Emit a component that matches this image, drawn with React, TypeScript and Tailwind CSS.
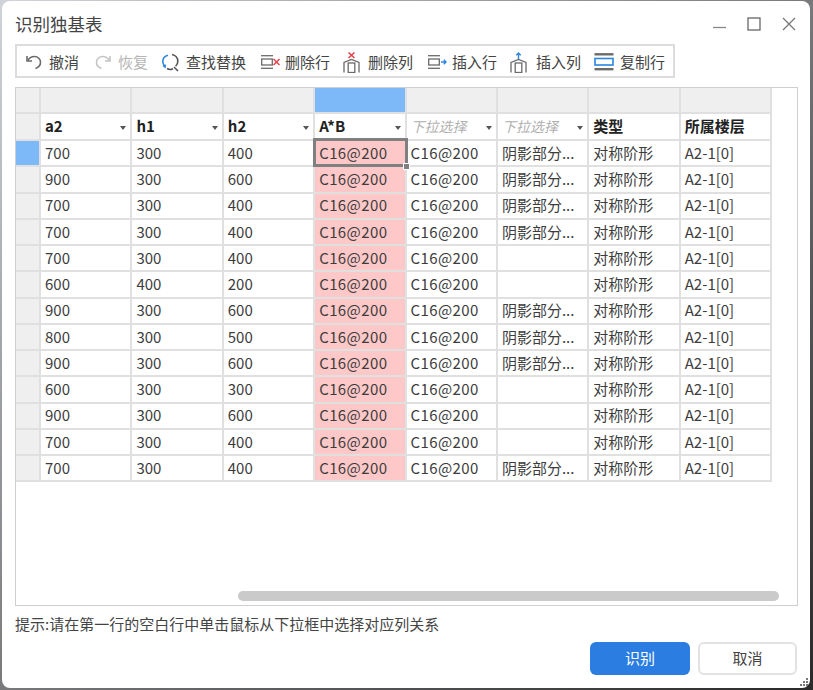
import React from "react";

const FONT = '"Noto Sans CJK SC", "Noto Sans", sans-serif';

const rows = [
  ["700", "300", "400", "阴影部分..."],
  ["900", "300", "600", "阴影部分..."],
  ["700", "300", "400", "阴影部分..."],
  ["700", "300", "400", "阴影部分..."],
  ["700", "300", "400", ""],
  ["600", "400", "200", ""],
  ["900", "300", "600", "阴影部分..."],
  ["800", "300", "500", "阴影部分..."],
  ["900", "300", "600", "阴影部分..."],
  ["600", "300", "300", ""],
  ["900", "300", "600", ""],
  ["700", "300", "400", ""],
  ["700", "300", "400", "阴影部分..."],
];

const gray = "#6b6b6b";
const blue = "#2b86e0";
const red = "#e8414a";

const UndoIcon = ({ color = gray, flip = false }: { color?: string; flip?: boolean }) => (
  <svg width="18" height="18" viewBox="0 0 18 18" fill="none" stroke={color} strokeWidth="1.6" style={flip ? { transform: "scaleX(-1)" } : undefined}>
    <path d="M2 3v5h5" />
    <path d="M2.500 8C4 5 6.500 3.500 9.500 3.500c3.500 0 6 2.700 6 5.700 0 3-2.200 5.300-5 6.300" />
  </svg>
);

const FindIcon = () => (
  <svg width="19" height="19" viewBox="0 0 19 19" fill="none" strokeWidth="1.6">
    <path d="M7 2.200C3.800 3 1.800 5.500 1.800 8.600c0 1.800.7 3.400 1.900 4.500" stroke={blue} />
    <path d="M2 12.500l2 1.600 .4-2.500" stroke={blue} />
    <path d="M11 1.500c3.500.6 5.800 3.500 5.800 6.800 0 2-.8 3.600-2.200 4.900" stroke="#555" />
    <path d="M6 15.500c1.500 1 4 1.200 6 .2M13 14l4 4" stroke="#555" />
  </svg>
);

const RowBox = () => (
  <g fill="none" stroke={gray} strokeWidth="1.300">
    <path d="M1 1.700h12" />
    <rect x="1.700" y="5" width="10.600" height="6" />
    <path d="M1 14.300h12" />
  </g>
);

const DelRowIcon = () => (
  <svg width="21" height="16" viewBox="0 0 21 16">
    <RowBox />
    <path d="M13.500 5l6 6M19.500 5l-6 6" stroke={red} strokeWidth="1.500" fill="none" />
  </svg>
);

const InsRowIcon = () => (
  <svg width="20" height="16" viewBox="0 0 20 16">
    <RowBox />
    <path d="M14 8h5M16.800 5.800L19 8l-2.200 2.200" stroke={blue} strokeWidth="1.400" fill="none" />
  </svg>
);

const ColBox = () => (
  <g fill="none" stroke={gray} strokeWidth="1.300">
    <path d="M1 20.500V10.500l7.500-3 7.500 3v10" />
    <rect x="5.200" y="11" width="6.600" height="9.500" />
  </g>
);

const DelColIcon = () => (
  <svg width="17" height="21" viewBox="0 0 17 21">
    <ColBox />
    <path d="M5.500.5l6 5.500M11.500.5l-6 5.500" stroke={red} strokeWidth="1.500" fill="none" />
  </svg>
);

const InsColIcon = () => (
  <svg width="17" height="21" viewBox="0 0 17 21">
    <ColBox />
    <path d="M8.500 7V1M6.300 3.200L8.500 1l2.200 2.200" stroke={blue} strokeWidth="1.400" fill="none" />
  </svg>
);

const CopyIcon = () => (
  <svg width="20" height="18" viewBox="0 0 20 18" fill="none">
    <path d="M.5 1.300h19" stroke={gray} strokeWidth="2.400" />
    <rect x="1" y="5.500" width="18" height="6.500" stroke={blue} strokeWidth="1.600" />
    <path d="M.5 16.200h19" stroke={gray} strokeWidth="2.400" />
  </svg>
);

const Arrow = () => (
  <span className="w-0 h-0 border-x-[3px] border-x-transparent border-t-[4px] border-t-[#555] mr-1 mt-[2px]" />
);

const HeadCell = ({ label, hint, arrow = true }: { label: string; hint?: boolean; arrow?: boolean }) => (
  <div className="flex items-center justify-between border-r-2 border-b-2 border-[#e0e0e0] pl-1 min-w-0 overflow-hidden">
    {hint ? (
      <span className="text-[14px] italic text-[#b0b0b0]">{label}</span>
    ) : (
      <span className="text-[15px] font-bold text-[#222]">{label}</span>
    )}
    {arrow && <Arrow />}
  </div>
);

const Cell = ({ children, pink = false, wide = false }: { children?: React.ReactNode; pink?: boolean; wide?: boolean }) => (
  <div className={`flex items-center border-r-2 border-b-2 border-[#e0e0e0] pl-1 text-[15px] text-[#3c3c3c] whitespace-nowrap overflow-hidden ${pink ? "bg-[#ffc8c8]" : "bg-white"} ${wide ? "tracking-[0.4px]" : ""}`}>
    {children}
  </div>
);

const Tool = ({ icon, label, className, gap = "gap-[6px]", off = false }: { icon: React.ReactNode; label: string; className: string; gap?: string; off?: boolean }) => (
  <div className={`flex items-center ${gap} ${className}`}>
    {icon}
    <span className={`text-[15px] ${off ? "text-[#b5b5b5]" : "text-[#444]"}`}>{label}</span>
  </div>
);

export default function App() {
  return (
    <div className="w-[813px] h-[690px] bg-linear-to-br from-[#d0d4d8] to-[#2a2a2a] overflow-hidden pl-[2px] pr-[3px] pt-[1px] pb-[2px]" style={{ fontFamily: FONT }}>
      <div className="relative w-full h-full bg-white rounded-lg flex flex-col">
        <div className="flex items-center justify-between h-[43px] pl-[13px] pr-[14px] pt-[3px]">
          <span className="text-[17.500px] text-[#444]">识别独基表</span>
          <div className="flex items-center gap-[21px] pb-[1px]">
            <svg width="13" height="13" viewBox="0 0 13 13"><path d="M0 10.500h13" stroke="#888" strokeWidth="1.300" /></svg>
            <svg width="14" height="14" viewBox="0 0 14 14"><rect x="1" y="1" width="12" height="12" fill="none" stroke="#666" strokeWidth="1.300" /></svg>
            <svg width="14" height="14" viewBox="0 0 14 14"><path d="M1 1l12 12M13 1L1 13" stroke="#777" strokeWidth="1.300" /></svg>
          </div>
        </div>

        <div className="ml-[13px] w-[660px] h-[34px] pt-[2px] flex items-center border-2 border-[#dcdcdc] shrink-0 whitespace-nowrap">
          <Tool className="ml-[8px]" icon={<UndoIcon />} label="撤消" />
          <Tool className="ml-[15px]" icon={<UndoIcon color="#c4c4c4" flip />} label="恢复" off />
          <Tool className="ml-[13px]" icon={<FindIcon />} label="查找替换" />
          <Tool className="ml-[14px]" gap="gap-[4px]" icon={<DelRowIcon />} label="删除行" />
          <Tool className="ml-[13px]" gap="gap-[8px]" icon={<DelColIcon />} label="删除列" />
          <Tool className="ml-[14px]" gap="gap-[5px]" icon={<InsRowIcon />} label="插入行" />
          <Tool className="ml-[13px]" gap="gap-[9px]" icon={<InsColIcon />} label="插入列" />
          <Tool className="ml-[13px]" gap="gap-[6px]" icon={<CopyIcon />} label="复制行" />
        </div>

        <div className="relative ml-[13px] mt-[9px] w-[783px] h-[519px] border border-[#cfcfcf] shrink-0">
          <div className="w-[756px] grid grid-cols-[25px_repeat(8,91.400px)] grid-rows-[26px_27px_repeat(13,26.250px)]">
            <div className="bg-[#efefef] border-r-2 border-b-2 border-[#e0e0e0]" />
            {[0, 1, 2, 3, 4, 5, 6, 7].map((i) => (
              <div key={i} className={`border-r-2 border-b-2 border-[#e0e0e0] ${i === 3 ? "bg-[#7db8f8]" : "bg-[#efefef]"}`} />
            ))}
            <div className="bg-[#efefef] border-r-2 border-b-2 border-[#e0e0e0]" />
            <HeadCell label="a2" />
            <HeadCell label="h1" />
            <HeadCell label="h2" />
            <HeadCell label="A*B" />
            <HeadCell label="下拉选择" hint />
            <HeadCell label="下拉选择" hint />
            <HeadCell label="类型" arrow={false} />
            <HeadCell label="所属楼层" arrow={false} />
            {rows.map((r, i) => (
              <React.Fragment key={i}>
                <div className={`border-r-2 border-b-2 border-[#e0e0e0] ${i === 0 ? "bg-[#7db8f8]" : "bg-[#efefef]"}`} />
                <Cell>{r[0]}</Cell>
                <Cell>{r[1]}</Cell>
                <Cell>{r[2]}</Cell>
                <Cell pink wide>C16@200</Cell>
                <Cell wide>C16@200</Cell>
                <Cell>{r[3]}</Cell>
                <Cell>对称阶形</Cell>
                <Cell>A2-1[0]</Cell>
              </React.Fragment>
            ))}
          </div>
          {/* current cell frame */}
          <div className="absolute left-[297px] top-[50px] w-[95px] h-[29px] border-[3px] border-[#808080]" />
          <div className="absolute left-[387px] top-[75px] w-[7px] h-[7px] bg-[#808080] border border-white" />
          <div className="absolute left-[222px] top-[503px] w-[541px] h-[10px] rounded-full bg-[#cacaca]" />
        </div>

        <div className="ml-[13px] mt-[8px] text-[15px] leading-[20px] text-[#444]">提示:请在第一行的空白行中单击鼠标从下拉框中选择对应列关系</div>

        <div className="flex justify-end gap-[8px] pr-[13px] mt-[8px]">
          <button className="w-[100px] h-[33px] rounded-md bg-[#2b7de1] text-white text-[15px]">识别</button>
          <button className="w-[99px] h-[33px] rounded-md border-2 border-[#e2e2e2] bg-white text-[#444] text-[15px]">取消</button>
        </div>

        <div className="absolute right-[2px] bottom-[2px] grid grid-cols-3 gap-[1px]">
          {[0, 0, 1, 0, 1, 1, 1, 1, 1].map((v, i) => (
            <span key={i} className={`w-[2px] h-[2px] ${v ? "bg-[#777]" : "bg-transparent"}`} />
          ))}
        </div>
      </div>
    </div>
  );
}
